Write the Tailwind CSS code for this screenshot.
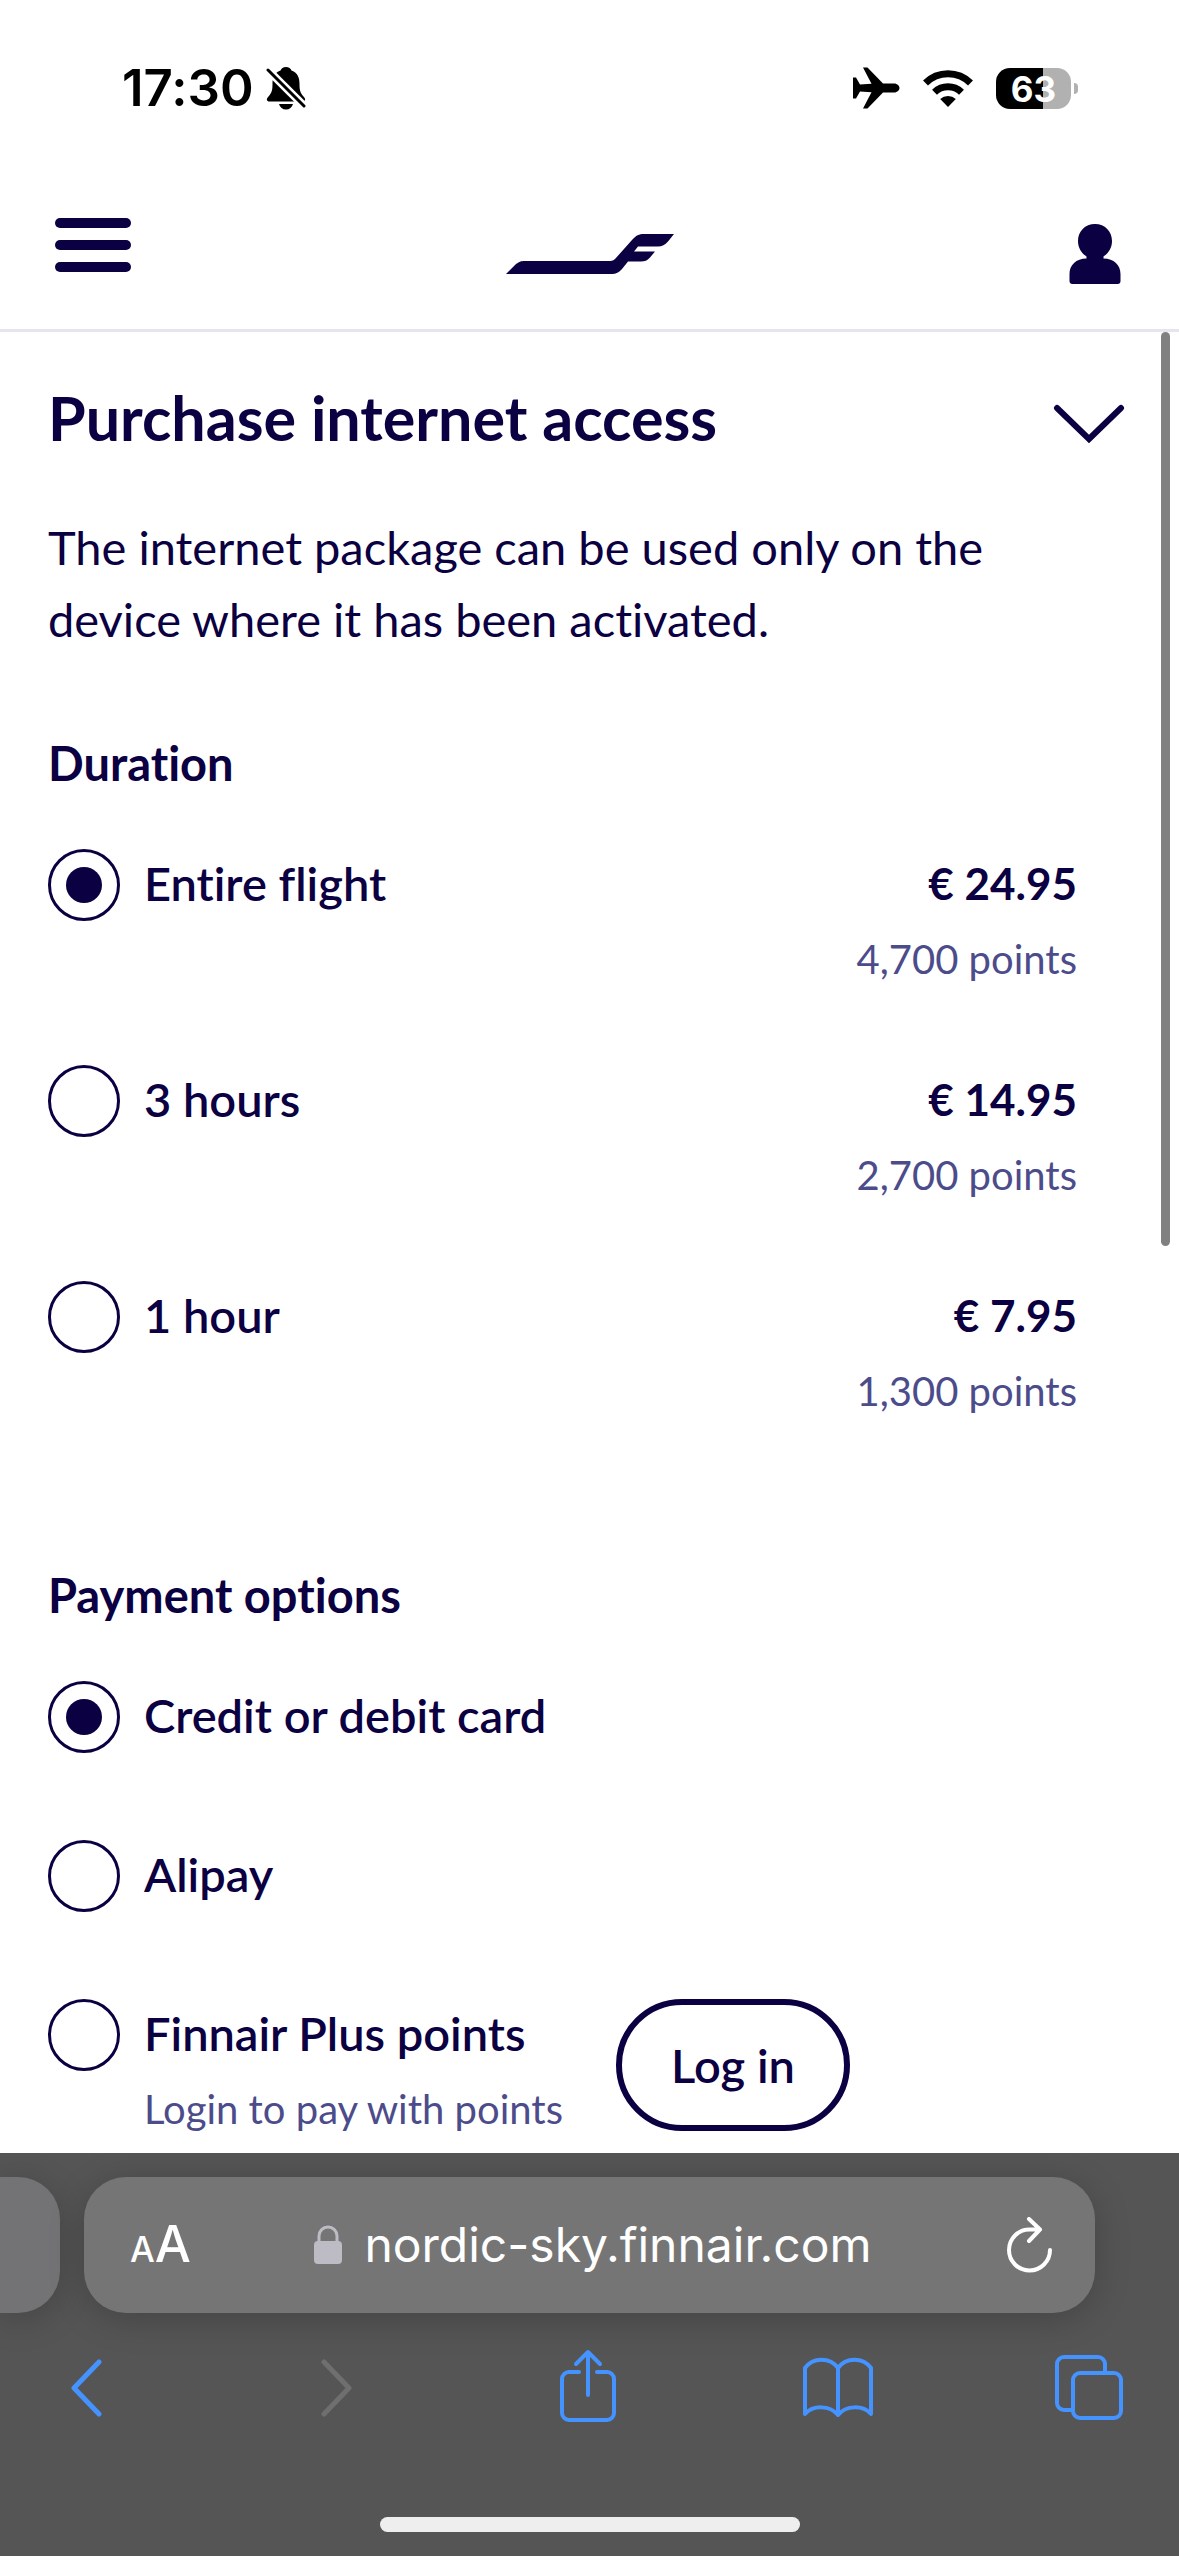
<!DOCTYPE html>
<html lang="en">
<head>
  <meta charset="UTF-8">
  <meta name="viewport" content="width=device-width, initial-scale=1">
  <title>Purchase internet access</title>
  <script src="https://cdn.jsdelivr.net/npm/@tailwindcss/browser@4"></script>
</head>
<body class="min-h-screen flex flex-col bg-white text-[#0b0041] font-['Lato',sans-serif] [font-variant-ligatures:none]">

  <!-- Status bar -->
  <div class="flex items-center justify-between h-[176px] pl-[122px] pr-[101px] text-black font-['Inter',sans-serif]">
    <div class="flex items-center gap-3">
      <span class="text-[51px] leading-[60px] font-semibold">17:30</span>
      <svg class="w-10 h-11" viewBox="0 0 40 44" aria-hidden="true">
        <path d="M20 1c-3 0-4.500 1.500-5.500 3.500C8 7 6.500 12 6.500 18c0 7-1 9-4 12.500C0 33 .5 35.500 3.500 35.500h33c3 0 3.500-2.500 1-5-3-3.500-4-5.500-4-12.500 0-6-1.500-11-8-13.500C24.500 2.500 23 1 20 1z" fill="#000"/>
        <path d="M13 38h14c-1 3.500-3.500 5.500-7 5.500S14 41.500 13 38z" fill="#000"/>
        <path d="M1 3l38 38" stroke="#fff" stroke-width="8"/>
        <path d="M2 4l36 36" stroke="#000" stroke-width="3" stroke-linecap="round"/>
      </svg>
    </div>
    <div class="flex items-center gap-[22px]">
      <svg class="w-[47px] h-[42px]" viewBox="0 0 47 42" aria-hidden="true">
        <path d="M0 10.500h3L7 17.500l11.500-.8L10 .5h4.500L30 16.500h11c3.500 0 5.500 2.500 5.500 4.500s-2 4.500-5.500 4.500H30L14.500 41.500H10l8.500-16.200L7 24.500l-4 7H0z"/>
      </svg>
      <svg class="w-[52px] h-[38px]" viewBox="0 0 52 38" aria-hidden="true">
        <path d="M3.500 14a32 32 0 0 1 45 0M12.500 23.200a19.500 19.500 0 0 1 27 0" fill="none" stroke="#000" stroke-width="7"/>
        <path d="M26 38l-7.800-8a11.500 11.500 0 0 1 15.600 0z"/>
      </svg>
      <div class="flex items-center gap-[3px]">
        <div class="w-[75px] h-[41px] rounded-[14px] bg-linear-to-r from-black from-63% to-[#b1b1b1] to-63% text-white text-[35px] leading-[42px] font-bold text-center">63</div>
        <div class="w-1 h-[11px] rounded-r-full bg-[#b1b1b1]"></div>
      </div>
    </div>
  </div>

  <!-- Site header -->
  <header class="grid grid-cols-[1fr_auto_1fr] items-center h-[156px] pt-[3px] pl-[55px] pr-[58px] border-b-[3px] border-[#e6e4ef]">
    <button type="button" aria-label="Menu" class="flex flex-col gap-3 w-[76px] mb-[18px]">
      <span class="h-[10px] rounded-full bg-[#0b0041]"></span>
      <span class="h-[10px] rounded-full bg-[#0b0041]"></span>
      <span class="h-[10px] rounded-full bg-[#0b0041]"></span>
    </button>
    <a href="#" aria-label="Finnair">
      <svg class="w-[168px] h-10 ml-1" viewBox="0 0 168 40" fill="#0b0041">
        <path d="M0 40L9 31C13 27.500 15 27 19 27h85c3 0 4-1 5.500-2.500L126 6c4-4.500 7-6 12-6h30l-6 7.500c-3 3.500-6 5-10 5h-20l-4 5h21l-5 6c-3 3-5 4-9 4h-13l-6 7.500c-3 3.500-6 5-10 5z"/>
      </svg>
    </a>
    <button type="button" aria-label="Profile" class="justify-self-end">
      <svg class="w-[52px] h-[60px]" viewBox="0 0 52 60" fill="#0b0041">
        <path d="M26 0c10 0 17 7.500 17 17 0 7-3.500 12-8.500 15.500V34.500C45 34.500 51.500 41 51.500 50v7c0 2-1 3-3 3h-45c-2 0-3-1-3-3v-7C.5 41 7 34.500 17.500 34.500V32.500C12.500 29 9 24 9 17 9 7.500 16 0 26 0z"/>
      </svg>
    </button>
  </header>

  <main class="relative flex-1 px-12 pt-[50px]">
    <!-- Scroll indicator -->
    <div class="absolute top-0 right-[9px] w-[9px] h-[914px] rounded-full bg-[#808080]"></div>

    <div class="flex items-center justify-between pr-[6px]">
      <h1 class="text-[61px] leading-[72px] font-bold">Purchase internet access</h1>
      <button type="button" aria-label="Collapse section" class="mt-3">
        <svg class="w-[72px] h-10" viewBox="0 0 72 40" fill="none" stroke="#0b0041" stroke-width="6" stroke-linecap="round">
          <path d="M4 4l32 31L68 4"/>
        </svg>
      </button>
    </div>
    <p class="mt-[57px] max-w-[1000px] text-[47px] leading-[72px]">The internet package can be used only on the device where it has been activated.</p>

    <fieldset class="mt-[72px] pr-[54px]">
      <legend class="text-[47px] leading-[72px] font-bold">Duration</legend>
      <div class="mt-12 flex flex-col gap-16">
        <div class="flex items-start gap-6">
          <input type="radio" name="duration" id="entire-flight" checked class="appearance-none shrink-0 grid place-items-center mt-0.5 size-[72px] rounded-full border-[3px] border-[#0b0041] before:size-9 before:rounded-full checked:before:bg-[#0b0041]">
          <label for="entire-flight" class="flex-1 flex justify-between">
            <span class="text-[47px] leading-[72px] font-semibold">Entire flight</span>
            <span class="flex flex-col items-end">
              <span class="text-[44px] leading-[72px] font-bold">€ 24.95</span>
              <span class="text-[40px] leading-[80px] text-[#4c4c8b]">4,700 points</span>
            </span>
          </label>
        </div>
        <div class="flex items-start gap-6">
          <input type="radio" name="duration" id="three-hours" class="appearance-none shrink-0 grid place-items-center mt-0.5 size-[72px] rounded-full border-[3px] border-[#0b0041] before:size-9 before:rounded-full checked:before:bg-[#0b0041]">
          <label for="three-hours" class="flex-1 flex justify-between">
            <span class="text-[47px] leading-[72px] font-semibold">3 hours</span>
            <span class="flex flex-col items-end">
              <span class="text-[44px] leading-[72px] font-bold">€ 14.95</span>
              <span class="text-[40px] leading-[80px] text-[#4c4c8b]">2,700 points</span>
            </span>
          </label>
        </div>
        <div class="flex items-start gap-6">
          <input type="radio" name="duration" id="one-hour" class="appearance-none shrink-0 grid place-items-center mt-0.5 size-[72px] rounded-full border-[3px] border-[#0b0041] before:size-9 before:rounded-full checked:before:bg-[#0b0041]">
          <label for="one-hour" class="flex-1 flex justify-between">
            <span class="text-[47px] leading-[72px] font-semibold">1 hour</span>
            <span class="flex flex-col items-end">
              <span class="text-[44px] leading-[72px] font-bold">€ 7.95</span>
              <span class="text-[40px] leading-[80px] text-[#4c4c8b]">1,300 points</span>
            </span>
          </label>
        </div>
      </div>
    </fieldset>

    <fieldset class="mt-32">
      <legend class="text-[47px] leading-[72px] font-bold">Payment options</legend>
      <div class="mt-12 flex flex-col gap-[85px]">
        <div class="flex items-start gap-6">
          <input type="radio" name="payment" id="card" checked class="appearance-none shrink-0 grid place-items-center mt-0.5 size-[72px] rounded-full border-[3px] border-[#0b0041] before:size-9 before:rounded-full checked:before:bg-[#0b0041]">
          <label for="card" class="text-[47px] leading-[72px] font-semibold">Credit or debit card</label>
        </div>
        <div class="flex items-start gap-6">
          <input type="radio" name="payment" id="alipay" class="appearance-none shrink-0 grid place-items-center mt-0.5 size-[72px] rounded-full border-[3px] border-[#0b0041] before:size-9 before:rounded-full checked:before:bg-[#0b0041]">
          <label for="alipay" class="text-[47px] leading-[72px] font-semibold">Alipay</label>
        </div>
        <div class="flex items-start gap-6">
          <input type="radio" name="payment" id="plus-points" class="appearance-none shrink-0 grid place-items-center mt-0.5 size-[72px] rounded-full border-[3px] border-[#0b0041] before:size-9 before:rounded-full checked:before:bg-[#0b0041]">
          <label for="plus-points" class="flex flex-col w-[448px]">
            <span class="text-[47px] leading-[72px] font-semibold">Finnair Plus points</span>
            <span class="text-[40px] leading-[80px] text-[#4c4c8b]">Login to pay with points</span>
          </label>
          <button type="button" class="mt-0.5 w-[234px] h-[132px] rounded-full border-[6px] border-[#0b0041] text-[47px] font-semibold">Log in</button>
        </div>
      </div>
    </fieldset>
  </main>

  <!-- Browser bar -->
  <footer class="bg-[#555556] pt-6 pb-6 font-['Inter',sans-serif] overflow-hidden">
    <div class="flex gap-6">
      <div class="w-[60px] h-[136px] rounded-r-[42px] bg-[#737375] shadow-[0_6px_36px_rgba(0,0,0,0.2)]"></div>
      <div class="flex-1 flex items-center justify-between h-[136px] mr-[84px] pl-[46px] pr-[42px] rounded-[42px] bg-[#757576] text-white shadow-[0_6px_36px_rgba(0,0,0,0.2)]">
        <button type="button" aria-label="Page settings" class="flex items-baseline font-medium"><span class="text-[35px]">A</span><span class="text-[51px] leading-[60px]">A</span></button>
        <div class="flex items-center gap-[22px] mr-3">
          <svg class="w-7 h-10" viewBox="0 0 28 40" aria-hidden="true">
            <rect x="0" y="16" width="28" height="23" rx="4" fill="#bdbcc4"/>
            <path d="M5 18v-7a9 9 0 0 1 18 0v7" fill="none" stroke="#bdbcc4" stroke-width="3"/>
          </svg>
          <span class="text-[48px] leading-[60px]">nordic-sky.finnair.com</span>
        </div>
        <button type="button" aria-label="Reload">
          <svg class="w-[46px] h-[56px]" viewBox="0 0 46 56" fill="none" stroke="#fff" stroke-width="4" stroke-linecap="round" stroke-linejoin="round">
            <path d="M43 33a20.500 20.500 0 1 1-20.500-20.500H33M22 2l11 10.500L22 24"/>
          </svg>
        </button>
      </div>
    </div>
    <nav class="mt-9 flex items-center justify-between pl-[50px] pr-[54px] text-[#4593ff]">
      <button type="button" aria-label="Back" class="w-[72px] flex justify-center">
        <svg class="w-8 h-[76px]" viewBox="0 0 32 76" fill="none" stroke="currentColor" stroke-width="5" stroke-linecap="round" stroke-linejoin="round"><path d="M29 13L4 39l25 26"/></svg>
      </button>
      <button type="button" aria-label="Forward" disabled class="w-[72px] flex justify-center text-[#6f6f70]">
        <svg class="w-8 h-[76px]" viewBox="0 0 32 76" fill="none" stroke="currentColor" stroke-width="5" stroke-linecap="round" stroke-linejoin="round"><path d="M3 13l25 26L3 65"/></svg>
      </button>
      <button type="button" aria-label="Share" class="w-[72px] flex justify-center">
        <svg class="w-[58px] h-[76px]" viewBox="0 0 58 76" fill="none" stroke="currentColor" stroke-width="4" stroke-linecap="round" stroke-linejoin="round"><path d="M20 23H10a7 7 0 0 0-7 7v34a7 7 0 0 0 7 7h38a7 7 0 0 0 7-7V30a7 7 0 0 0-7-7H38M29 46V3M17 15L29 3l12 12"/></svg>
      </button>
      <button type="button" aria-label="Bookmarks" class="w-[72px] flex justify-center">
        <svg class="w-[72px] h-[76px]" viewBox="0 0 72 76" fill="none" stroke="currentColor" stroke-width="4" stroke-linecap="round" stroke-linejoin="round"><path d="M36 19C28 8 11 8 3 19v46c8-9 25-9 33 1 8-10 25-10 33-1V19C61 8 44 8 36 19zM36 19v47"/></svg>
      </button>
      <button type="button" aria-label="Tabs" class="w-[72px] flex justify-center">
        <svg class="w-[68px] h-[76px]" viewBox="0 0 68 76" fill="none" stroke="currentColor" stroke-width="4"><rect x="18" y="24" width="48" height="45" rx="7"/><path d="M18 61H9a7 7 0 0 1-7-7V15a7 7 0 0 1 7-7h34a7 7 0 0 1 7 7v9"/></svg>
      </button>
    </nav>
    <div class="mt-[92px] mx-auto w-[420px] h-[15px] rounded-full bg-[#eeeeee]"></div>
  </footer>
</body>
</html>
